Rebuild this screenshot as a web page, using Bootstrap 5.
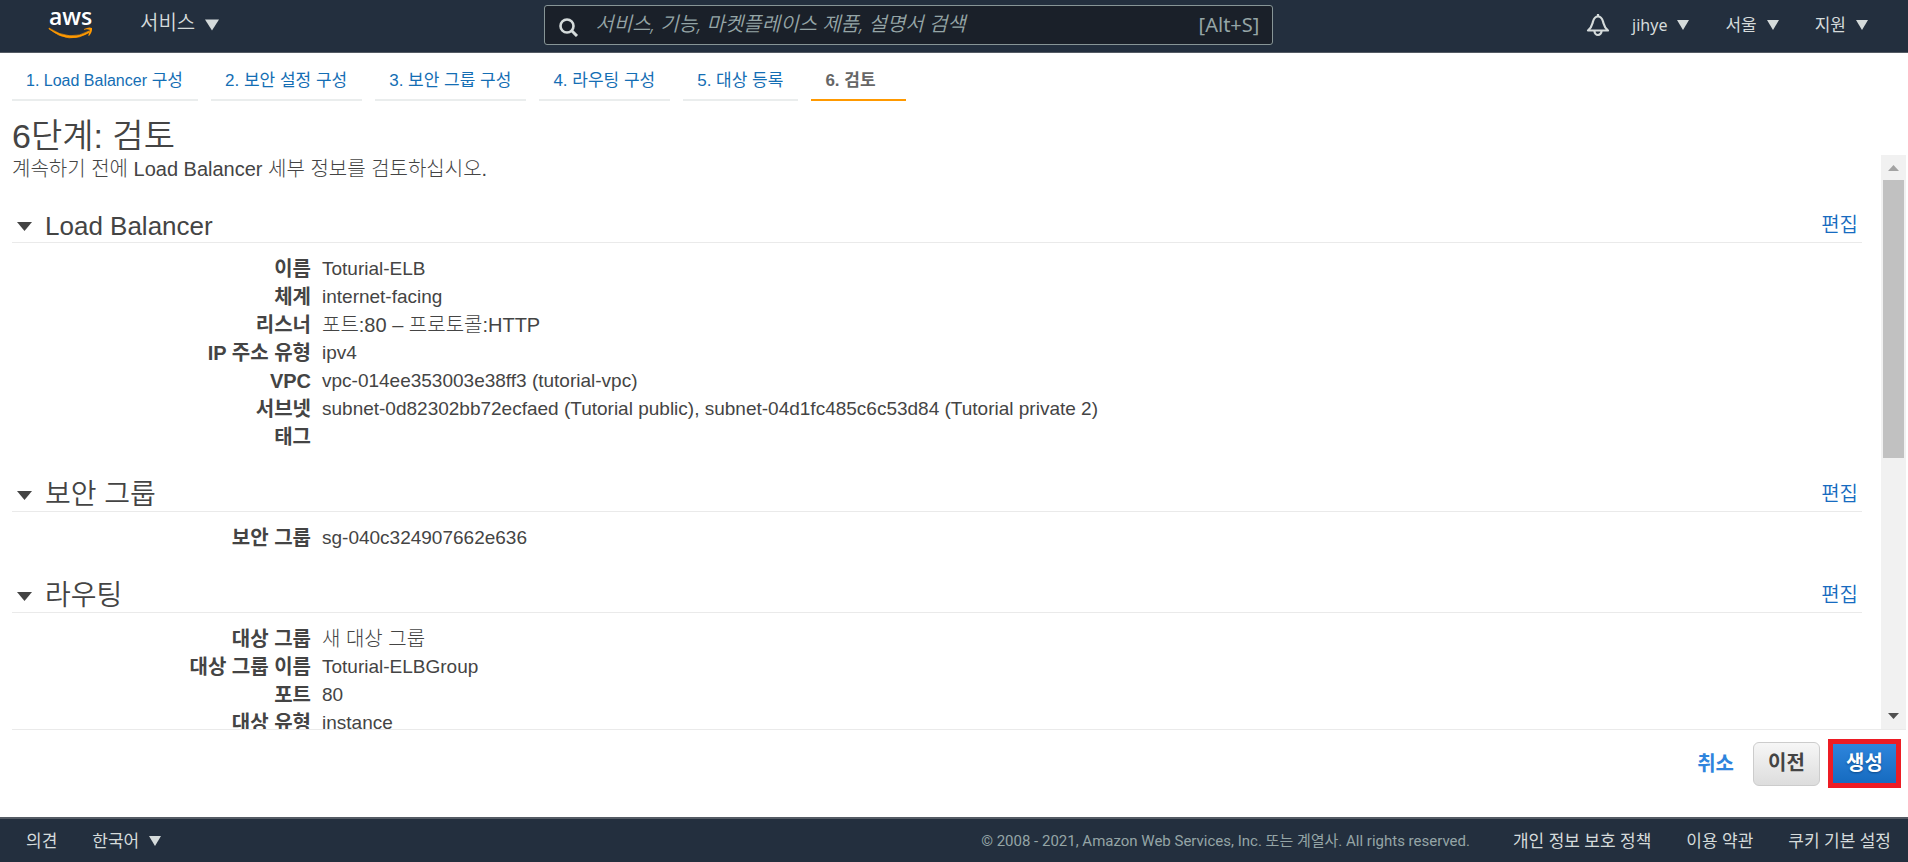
<!DOCTYPE html>
<html lang="ko">
<head>
<meta charset="utf-8">
<meta name="viewport" content="width=device-width, initial-scale=1">
<title>6단계: 검토</title>
<link href="https://cdn.jsdelivr.net/npm/bootstrap@5.3.0/dist/css/bootstrap.min.css" rel="stylesheet">
<style>
  body { font-family: "Liberation Sans", "Noto Sans CJK KR", sans-serif; font-size: 19px; line-height: 28px; color: #444; }
  a { text-decoration: none; color: #146eb4; }
  .console-font { font-family: "Noto Sans", "Noto Sans CJK KR", sans-serif; }
  .console-top { height: 53px; background: #232f3e; border-bottom: 1px solid #545b64; padding: 0 39px 2px 48px; }
  .console-foot { height: 45px; background: #232f3e; border-top: 2px solid #545b64; padding: 0 17px 0 26px; font-size: 15px; }
  .console-top button, .console-foot button, .console-foot a { color: #d5dbdb; background: none; border: 0; padding: 0; gap: 9px; font-size: 17px; line-height: 24px; white-space: nowrap; }
  .console-top .menu-services { font-size: 20px; font-weight: 350; }
  .brand-link { margin: 0 46px 6px 0; }
  .side-start { flex: 5 1 0; }
  .side-end { flex: 6 1 0; gap: 35px; }
  .search-field { flex: 0 1 729px; height: 40px; background: #1a2029; border: 1px solid #879596; border-radius: 3px; padding: 0 13px 0 14px; color: #95a5a6; font-size: 20px; }
  .search-field svg { margin-top: 4px; }
  .search-field input { background: none; border: 0; outline: 0; color: inherit; font-size: 20px; font-weight: 350; height: 36px; padding: 0 0 4px; }
  .search-field input::placeholder { color: #95a5a6; font-style: italic; opacity: 1; }
  .alert-group { gap: 22px; }
  .steps { gap: 13px; padding: 14px 12px 0; font-size: 17px; line-height: 28px; }
  .steps a { border-bottom: 2px solid #eaeded; padding: 0 15px 4px 14px; }
  .steps .latin { font-size: 16px; }
  .steps a.current { border-color: #ff9900; color: #666; font-weight: bold; padding-right: 30px; }
  .page-title { font-size: 34px; font-weight: 350; line-height: 36px; margin: 17px 0 1px; padding: 0 12px; }
  .review { padding-left: 12px; padding-right: 2px; font-weight: 300; }
  .review-body { padding-right: 19px; }
  .review-body p, .review-body dt, .ko { font-size: 20px; }
  .review-body p { line-height: 28px; margin-bottom: -1px; }
  .review-head { height: 37px; border-bottom: 1px solid #eaeaea; padding: 4px 4px 0 5px; margin-top: 24px; }
  .review-head h2 { font-size: 26px; font-weight: 350; line-height: 34px; gap: 13px; }
  .review-head h2.ko { font-size: 28px; }
  .review-head a { color: #166bc0; font-size: 20px; font-weight: 350; line-height: 31px; }
  .review-body dl { padding-top: 12px; }
  .review-body dt { width: 299px; flex: none; text-align: right; }
  .review-body dd { margin: 0 0 0 11px; }
  .scroll-rail { width: 25px; background: #f1f1f1; padding: 0 2px; }
  .scroll-rail svg { height: 25px; width: 21px; flex: none; }
  .scroll-thumb { height: 53%; background: #c1c1c1; }
  .actions { height: 88px; margin-left: 12px; margin-right: 2px; border-top: 1px solid #eaeaea; padding: 9px 5px 0 0; font-size: 20px; font-weight: bold; }
  .actions a { color: #2e84dd; margin-right: 19px; }
  .actions .btn { font-size: 20px; font-weight: bold; line-height: 28px; }
  .actions .btn-back { width: 67px; height: 44px; border: 1px solid #ccc; border-radius: 6px; background: linear-gradient(#f6f6f6, #ddd); color: #444; padding: 0 0 2px; }
  .actions .btn-create { width: 73px; height: 49px; border: 5px solid #ed1c24; border-radius: 0; background: linear-gradient(#2e85dc, #166bc0); color: #fff; padding: 0 0 2px; text-shadow: 0 1px 2px #0b4a8b; }
  .legal { color: #95a5a6; margin-right: 8px; font-family: Roboto, "Noto Sans CJK KR", sans-serif; }
  .foot-end { gap: 35px; }
</style>
</head>
<body>
<div class="d-flex flex-column vh-100 overflow-hidden">
  <header class="console-top console-font d-flex align-items-center flex-shrink-0">
    <div class="side-start d-flex align-items-center">
      <a href="#" class="brand-link d-flex" aria-label="aws">
        <svg class="overflow-visible" width="46" height="34" viewBox="0 0 46 34">
          <text x="1" y="20" font-family="Open Sans, sans-serif" font-size="23" font-weight="600" fill="#fff">aws</text>
          <path d="M1 23Q22 37 41 26L41.500 27.500Q21 40 1 24Z" fill="#f90" stroke="#f90" stroke-width=".6"/>
          <path d="M36 24Q41 21.500 44 23Q44.500 27 41 31L40.300 30.500Q42 27 41.500 24.700Q39 24 36 24.700Z" fill="#f90"/>
        </svg>
      </a>
      <button type="button" class="menu-services d-flex align-items-center pb-1">서비스
        <svg class="mt-1" width="16" height="14" viewBox="0 0 16 14"><path d="M1 1.500h14L8 12.500z" fill="#d5dbdb"/></svg></button>
    </div>
    <div class="search-field d-flex align-items-center">
      <svg class="flex-shrink-0" width="20" height="20" viewBox="0 0 20 20" fill="none" stroke="#d5dbdb"><circle cx="8" cy="9" r="6.500" stroke-width="2.600"/><path d="M12.500 13.500l5.500 5.500" stroke-width="3"/></svg>
      <input class="flex-grow-1 ms-3" type="text" aria-label="검색" placeholder="서비스, 기능, 마켓플레이스 제품, 설명서 검색">
      <span>[Alt+S]</span>
    </div>
    <div class="side-end d-flex justify-content-end align-items-center">
      <div class="alert-group d-flex align-items-center">
        <button type="button" class="d-flex" aria-label="알림"><svg width="24" height="24" viewBox="0 0 24 24" fill="none" stroke="#d5dbdb" stroke-width="2.200"><path d="M2 17.500C6 14 6 12 7 8.500 8 5 10 3.500 12 3.500S16 5 17 8.500C18 12 18 14 22 17.500Z" stroke-linejoin="round"/><path d="M12 1v3M8.500 18a3.500 4 0 0 0 7 0"/></svg></button>
        <button type="button" class="d-flex align-items-center"><span class="fs-6">jihye</span> <svg width="14" height="12" viewBox="0 0 14 12"><path d="M1 1h12L7 11z" fill="#d5dbdb"/></svg></button>
      </div>
      <button type="button" class="d-flex align-items-center">서울 <svg width="14" height="12" viewBox="0 0 14 12"><path d="M1 1h12L7 11z" fill="#d5dbdb"/></svg></button>
      <button type="button" class="d-flex align-items-center">지원 <svg width="14" height="12" viewBox="0 0 14 12"><path d="M1 1h12L7 11z" fill="#d5dbdb"/></svg></button>
    </div>
  </header>

  <nav class="steps d-flex flex-shrink-0">
    <a href="#"><span class="latin">1. Load Balancer</span> 구성</a>
    <a href="#">2. 보안 설정 구성</a>
    <a href="#">3. 보안 그룹 구성</a>
    <a href="#">4. 라우팅 구성</a>
    <a href="#">5. 대상 등록</a>
    <a href="#" class="current" aria-current="step">6. 검토</a>
  </nav>

  <h1 class="page-title flex-shrink-0">6단계: 검토</h1>

  <main class="review d-flex flex-grow-1 overflow-hidden">
    <div class="review-body flex-grow-1 overflow-hidden">
      <p>계속하기 전에 Load Balancer 세부 정보를 검토하십시오.</p>

      <section>
        <div class="review-head d-flex justify-content-between">
          <h2 class="mb-0 d-flex align-items-center"><svg width="15" height="9" viewBox="0 0 15 9"><path d="M0 0h15L7.500 9z" fill="#444"/></svg>Load Balancer</h2>
          <a href="#">편집</a>
        </div>
        <dl class="mb-0">
          <div class="d-flex"><dt>이름</dt><dd>Toturial-ELB</dd></div>
          <div class="d-flex"><dt>체계</dt><dd>internet-facing</dd></div>
          <div class="d-flex"><dt>리스너</dt><dd class="ko">포트:80 – 프로토콜:HTTP</dd></div>
          <div class="d-flex"><dt>IP 주소 유형</dt><dd>ipv4</dd></div>
          <div class="d-flex"><dt>VPC</dt><dd>vpc-014ee353003e38ff3 (tutorial-vpc)</dd></div>
          <div class="d-flex"><dt>서브넷</dt><dd>subnet-0d82302bb72ecfaed (Tutorial public), subnet-04d1fc485c6c53d84 (Tutorial private 2)</dd></div>
          <div class="d-flex"><dt>태그</dt><dd></dd></div>
        </dl>
      </section>

      <section>
        <div class="review-head d-flex justify-content-between">
          <h2 class="ko mb-0 d-flex align-items-center"><svg width="15" height="9" viewBox="0 0 15 9"><path d="M0 0h15L7.500 9z" fill="#444"/></svg>보안 그룹</h2>
          <a href="#">편집</a>
        </div>
        <dl class="mb-0">
          <div class="d-flex"><dt>보안 그룹</dt><dd>sg-040c324907662e636</dd></div>
        </dl>
      </section>

      <section>
        <div class="review-head d-flex justify-content-between">
          <h2 class="ko mb-0 d-flex align-items-center"><svg width="15" height="9" viewBox="0 0 15 9"><path d="M0 0h15L7.500 9z" fill="#444"/></svg>라우팅</h2>
          <a href="#">편집</a>
        </div>
        <dl class="mb-0">
          <div class="d-flex"><dt>대상 그룹</dt><dd class="ko">새 대상 그룹</dd></div>
          <div class="d-flex"><dt>대상 그룹 이름</dt><dd>Toturial-ELBGroup</dd></div>
          <div class="d-flex"><dt>포트</dt><dd>80</dd></div>
          <div class="d-flex"><dt>대상 유형</dt><dd>instance</dd></div>
        </dl>
      </section>
    </div>
    <div class="scroll-rail d-flex flex-column flex-shrink-0" aria-hidden="true">
      <svg viewBox="0 0 21 25"><path d="M5 16h11l-5.500-6z" fill="#a3a3a3"/></svg>
      <div class="flex-grow-1"><div class="scroll-thumb"></div></div>
      <svg viewBox="0 0 21 25"><path d="M5 9h11l-5.500 6z" fill="#505050"/></svg>
    </div>
  </main>

  <div class="actions d-flex justify-content-end align-items-start flex-shrink-0">
    <div class="d-flex align-items-center">
      <a href="#">취소</a>
      <button type="button" class="btn btn-back me-2">이전</button>
      <button type="button" class="btn btn-create">생성</button>
    </div>
  </div>

  <footer class="console-foot console-font d-flex align-items-center flex-shrink-0">
    <div class="d-flex align-items-center foot-end">
      <a href="#">의견</a>
      <button type="button" class="d-flex align-items-center">한국어 <svg width="14" height="12" viewBox="0 0 14 12"><path d="M1 1h12L7 11z" fill="#d5dbdb"/></svg></button>
    </div>
    <div class="d-flex align-items-center foot-end ms-auto">
      <span class="legal">© 2008 - 2021, Amazon Web Services, Inc. 또는 계열사. All rights reserved.</span>
      <a href="#">개인 정보 보호 정책</a>
      <a href="#">이용 약관</a>
      <a href="#">쿠키 기본 설정</a>
    </div>
  </footer>
</div>
<script src="https://cdn.jsdelivr.net/npm/bootstrap@5.3.0/dist/js/bootstrap.bundle.min.js"></script>
</body>
</html>
